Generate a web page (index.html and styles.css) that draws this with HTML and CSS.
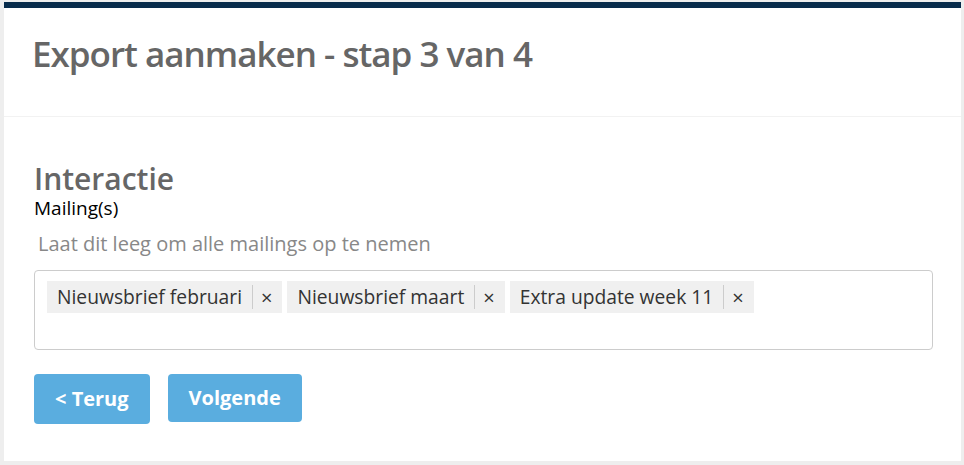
FILE: index.html
```html
<!DOCTYPE html>
<html>

<head>
  <meta charset="UTF-8">
  <meta name="viewport" content="width=device-width, initial-scale=1.0">
  <title>Export aanmaken</title>
  <link rel="stylesheet" href="styles.css">
</head>

<body>
  <div class="card">
    <div class="card-header">
      <h1 class="title">Export aanmaken - stap 3 van 4</h1>
    </div>
    <form class="card-body">
      <h2 class="section-title">Interactie</h2>
      <label class="field-label" for="mailings">Mailing(s)</label>
      <p class="field-help">Laat dit leeg om alle mailings op te nemen</p>
      <div class="tag-input" id="mailings">
        <span class="tag"><span class="tag-text">Nieuwsbrief februari</span><span class="tag-remove">×</span></span>
        <span class="tag"><span class="tag-text">Nieuwsbrief maart</span><span class="tag-remove">×</span></span>
        <span class="tag"><span class="tag-text">Extra update week 11</span><span class="tag-remove">×</span></span>
      </div>
      <div class="actions">
        <a class="btn btn-back" href="#">&lt; Terug</a>
        <button class="btn" type="button">Volgende</button>
      </div>
    </form>
  </div>
</body>

</html>
```

FILE: styles.css
```css
html,
body {
  height: 100%;
}

body {
  margin: 0;
  padding: 2px 3px 4px 4px;
  box-sizing: border-box;
  background: #eeeeee;
  font-family: "Open Sans", sans-serif;
  overflow: hidden;
}

.card {
  height: 100%;
  box-sizing: border-box;
  background: #fff;
  border-top: 6px solid #082c4c;
}

.card-header {
  padding: 22px 26px 38px 28px;
  border-bottom: 1px solid #f2f2f2;
}

.title {
  margin: 0;
  font-size: 35px;
  line-height: 48px;
  font-weight: 600;
  color: #666;
  letter-spacing: -1px;
}

.card-body {
  padding: 45px 28px 0 30px;
}

.section-title {
  margin: 0;
  font-size: 30px;
  font-weight: 600;
  line-height: 34px;
  color: #666;
}

.field-label {
  display: block;
  font-size: 19px;
  line-height: 24px;
  color: #000;
}

.field-help {
  margin: 11px 0 0 4px;
  font-size: 20px;
  line-height: 26px;
  color: #888;
}

.tag-input {
  margin-top: 13px;
  height: 80px;
  box-sizing: border-box;
  padding: 10px 12px;
  border: 1px solid #ccc;
  border-radius: 4px;
  display: flex;
  align-items: flex-start;
  gap: 5px;
}

.tag {
  display: flex;
  align-items: center;
  height: 32px;
  background: #f0f0f0;
  color: #333;
  font-size: 19.25px;
}

.tag-text {
  padding: 0 10px;
  border-right: 1px solid #ccc;
  line-height: 24px;
}

.tag-remove {
  padding: 0 10px 0 8px;
  font-size: 20px;
}

.actions {
  display: flex;
  gap: 18px;
  margin-top: 24px;
  align-items: flex-start;
}

.btn {
  display: inline-block;
  padding: 0 21px;
  height: 48px;
  line-height: 48px;
  border: none;
  border-radius: 4px;
  background: #5aaddf;
  color: #fff;
  font-family: "Open Sans", sans-serif;
  font-size: 20px;
  font-weight: 700;
  text-decoration: none;
  cursor: pointer;
}

.btn-back {
  height: 50px;
  line-height: 50px;
}
```
